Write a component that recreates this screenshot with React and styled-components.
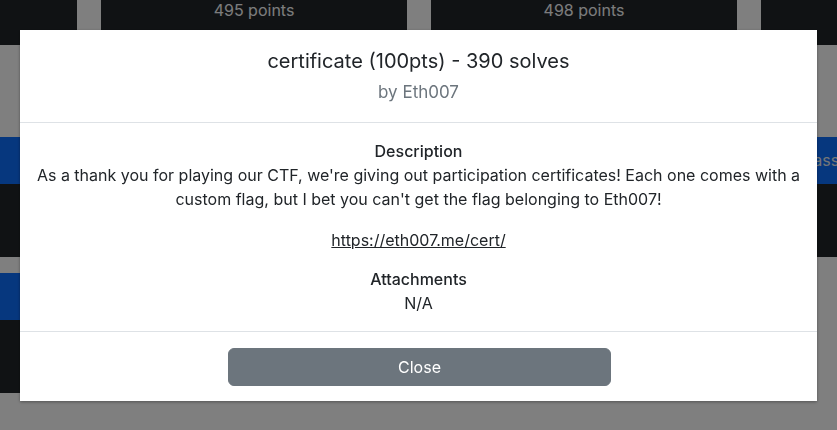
import React from "react";
import styled, { createGlobalStyle } from "styled-components";

const GlobalStyle = createGlobalStyle`
  html, body {
    margin: 0;
    padding: 0;
    background: #ffffff;
    overflow: hidden;
    width: 837px;
    height: 430px;
  }
  body {
    font-family: Inter, "Noto Sans", "Liberation Sans", sans-serif;
    color: #212529;
    font-size: 16px;
    line-height: 1.5;
  }
  * { box-sizing: border-box; }
`;

const Board = styled.div`
  margin-left: -229px;
  width: 1300px;
`;

const Grid = styled.div`
  display: grid;
  grid-template-columns: repeat(4, 306px);
  column-gap: 24px;
  row-gap: 16px;
`;

const CategoryGap = styled.div`
  height: 92px;
`;

const PointsCard = styled.div`
  background: #212529;
  color: #f8f9fa;
  padding: 0 16px 25px;
  text-align: center;
  font-size: 16px;
  line-height: 20px;
`;

const Card = styled.div`
  display: flex;
  flex-direction: column;
  background: #212529;
  height: 120px;
`;

const CardHeader = styled.div`
  background: #0d6efd;
  color: #e9ecef;
  height: 47px;
  padding: 11px 16px 11px 7px;
  font-size: 16px;
  line-height: 24px;
  white-space: nowrap;
  overflow: hidden;
`;

const CardBody = styled.div`
  flex: 1;
`;

const Backdrop = styled.div`
  position: fixed;
  inset: 0;
  background: rgba(0, 0, 0, 0.5);
  display: flex;
  justify-content: center;
  align-items: flex-start;
  padding: 30px 20px;
`;

const Dialog = styled.div`
  width: 797px;
  background: #ffffff;
  box-shadow: 0 1px 3px rgba(0, 0, 0, 0.35);
  display: flex;
  flex-direction: column;
`;

const Header = styled.div`
  padding: 16px 16px 18px;
  border-bottom: 1px solid #dee2e6;
  text-align: center;
`;

const Title = styled.div`
  font-size: 20px;
  line-height: 30px;
  font-weight: 400;
  margin-bottom: 4px;
`;

const Author = styled.div`
  font-size: 17px;
  line-height: 24px;
  color: #6c757d;
`;

const Body = styled.div`
  padding: 16px 16px 16px;
  text-align: center;
  border-bottom: 1px solid #dee2e6;
`;

const SectionTitle = styled.div`
  font-weight: 500;
  line-height: 24px;
`;

const Paragraph = styled.p`
  margin: 0 0 ${(p) => p.$gap ?? 16}px;
  line-height: 24px;
`;

const Link = styled.a`
  color: #212529;
  text-decoration: underline;
`;

const Footer = styled.div`
  padding: 16px 16px 15px 18px;
  display: flex;
  justify-content: center;
`;

const Button = styled.button`
  width: 383px;
  height: 38px;
  border: 1px solid #6c757d;
  border-radius: 6px;
  background: #6c757d;
  color: #ffffff;
  font-family: inherit;
  font-size: 16px;
  line-height: 24px;
  padding: 6px 12px;
`;

const topRow = ["490 points", "495 points", "498 points", "500 points"];
const secondRows = ["Glass", "Web", "Misc", "Compass", "Pwn", "Rev", "Crypto"];

export default function App() {
  return (
    <>
      <GlobalStyle />
      <Board>
        <Grid>
          {topRow.map((p) => (
            <PointsCard key={p}>{p}</PointsCard>
          ))}
        </Grid>
        <CategoryGap />
        <Grid>
          {secondRows.map((n) => (
            <Card key={n}>
              <CardHeader>{n}</CardHeader>
              <CardBody />
            </Card>
          ))}
        </Grid>
      </Board>
      <Backdrop>
        <Dialog>
          <Header>
            <Title>certificate (100pts) - 390 solves</Title>
            <Author>by Eth007</Author>
          </Header>
          <Body>
            <SectionTitle>Description</SectionTitle>
            <Paragraph $gap={17}>
              As a thank you for playing our CTF, we're giving out participation
              certificates! Each one comes with a custom flag, but I bet you
              can't get the flag belonging to Eth007!
            </Paragraph>
            <Paragraph $gap={15}>
              <Link href="#">https://eth007.me/cert/</Link>
            </Paragraph>
            <SectionTitle>Attachments</SectionTitle>
            <Paragraph $gap={0}>N/A</Paragraph>
          </Body>
          <Footer>
            <Button>Close</Button>
          </Footer>
        </Dialog>
      </Backdrop>
    </>
  );
}
